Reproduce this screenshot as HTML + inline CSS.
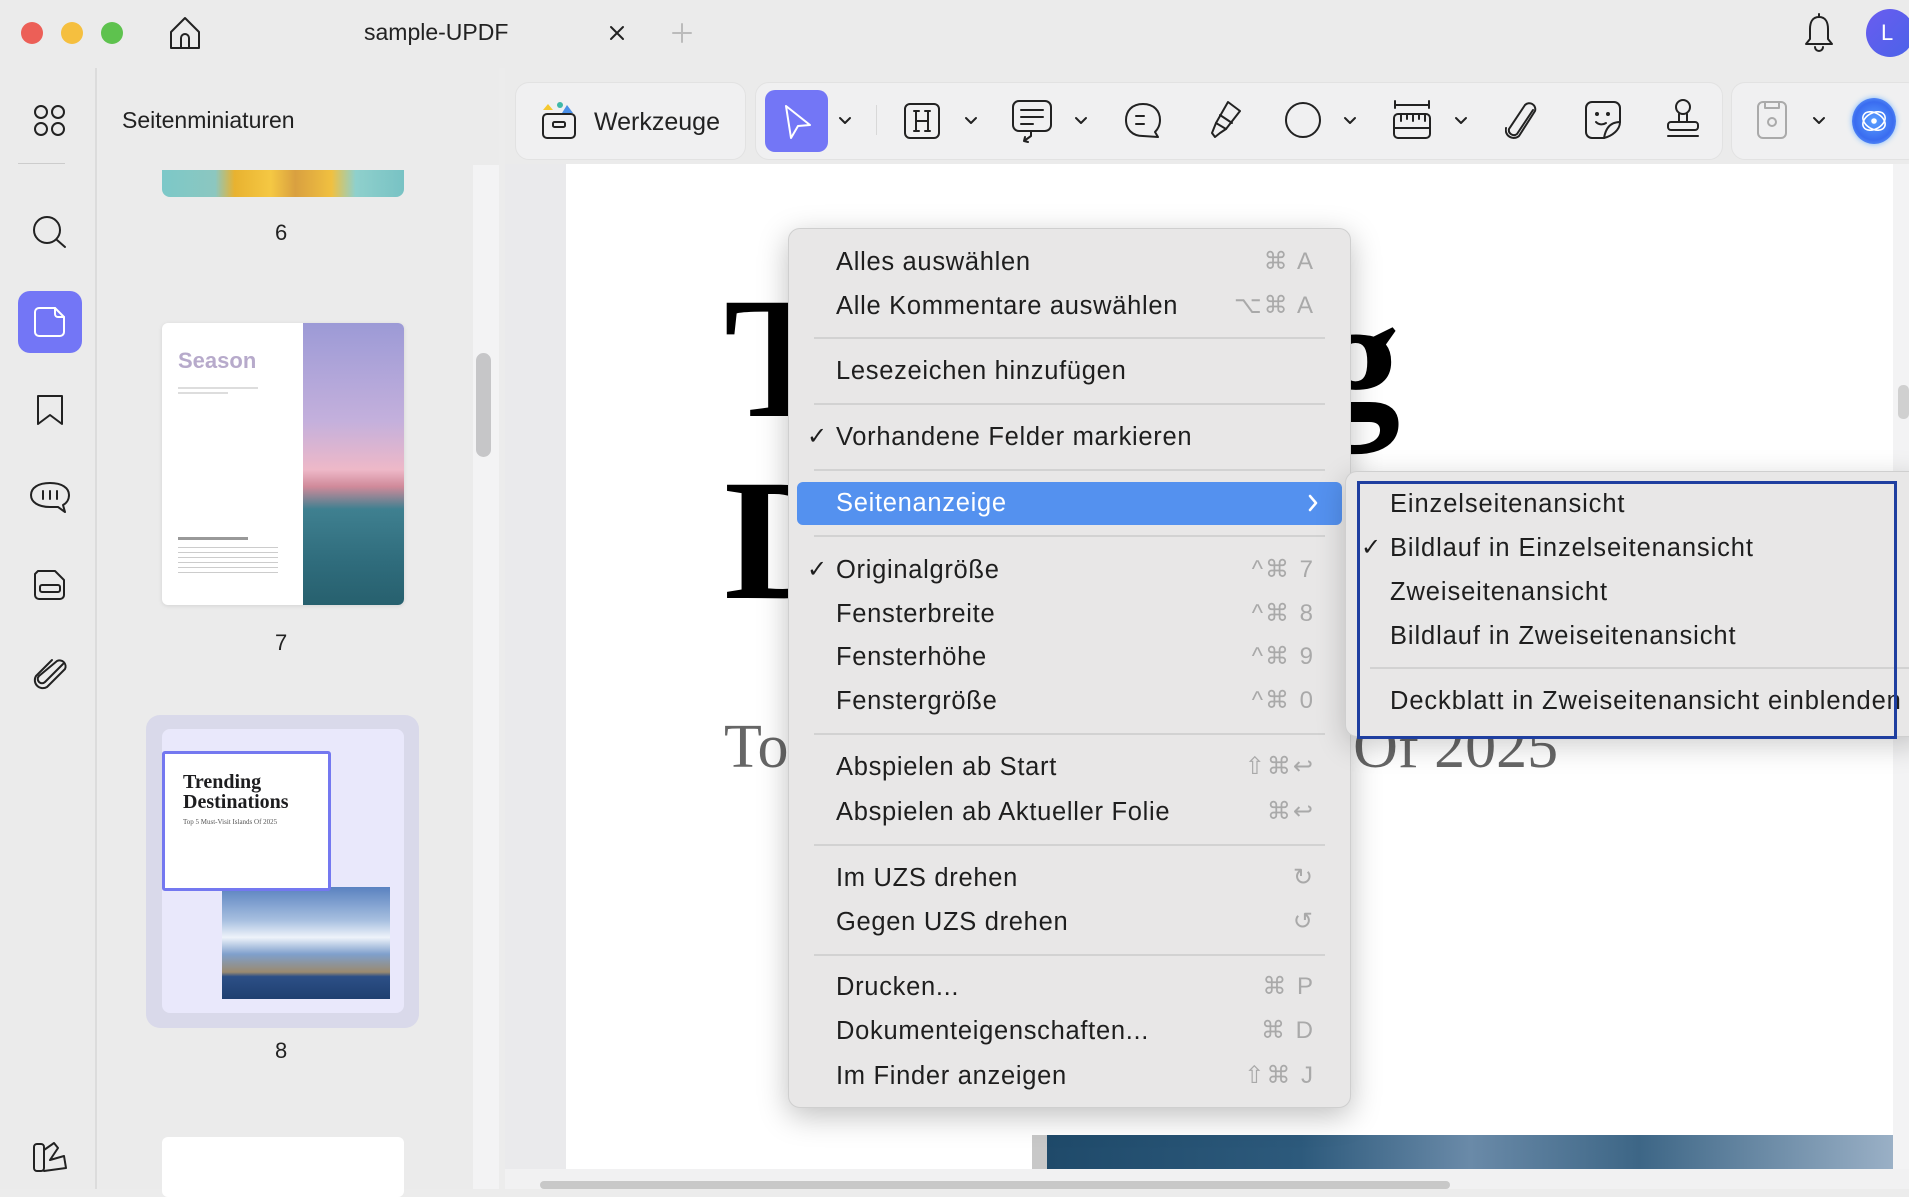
<!DOCTYPE html>
<html><head><meta charset="utf-8"><style>
*{margin:0;padding:0;box-sizing:border-box}
body{width:1909px;height:1189px;overflow:hidden;background:#ececec;font-family:"Liberation Sans",sans-serif;position:relative;color:#1d1d1f}
.a{position:absolute}
.ic{position:absolute;fill:none;stroke:#222;stroke-width:2;stroke-linecap:round;stroke-linejoin:round}
.mi{position:absolute;left:836px;font-size:25.5px;letter-spacing:0.7px;color:#1e1e1e;line-height:30px;transform:translateY(-15px);white-space:nowrap}
.sc{position:absolute;right:594px;font-size:24px;color:#a9a9a9;line-height:30px;transform:translateY(-15px);letter-spacing:2px}
.sep{position:absolute;left:814px;width:511px;height:2px;background:#d2d2d2}
.chk{position:absolute;font-size:24px;line-height:30px;transform:translateY(-15px);color:#1e1e1e}
.smi{position:absolute;left:1390px;font-size:25.5px;letter-spacing:0.9px;color:#1e1e1e;line-height:30px;transform:translateY(-15px);white-space:nowrap}
</style></head><body>
<!-- title bar -->
<div class="a" style="left:0;top:0;width:1909px;height:68px;background:#ebebeb"></div>
<div class="a" style="left:21px;top:22px;width:22px;height:22px;border-radius:50%;background:#ec5f57"></div>
<div class="a" style="left:61px;top:22px;width:22px;height:22px;border-radius:50%;background:#f5bf3f"></div>
<div class="a" style="left:101px;top:22px;width:22px;height:22px;border-radius:50%;background:#5ec24e"></div>
<svg class="ic" style="left:166px;top:14px" width="38" height="38" viewBox="0 0 38 38"><path d="M5 18 L19 4 L33 18 V34 H5 Z"/><path d="M15 34 V24 a4 4 0 0 1 8 0 V34"/></svg>
<div class="a" style="left:364px;top:19px;font-size:23px;color:#222">sample-UPDF</div>
<svg class="ic" style="left:609px;top:25px" width="16" height="16"><path d="M2 2L14 14M14 2L2 14"/></svg>
<svg class="ic" style="left:672px;top:23px;stroke:#bbb" width="20" height="20"><path d="M10 1V19M1 10H19"/></svg>
<svg class="ic" style="left:1802px;top:13px" width="34" height="40" viewBox="0 0 34 40"><path d="M17 4 C10 4 8 10 8 16 V26 L4 31 H30 L26 26 V16 C26 10 24 4 17 4Z"/><path d="M13 34 a4 4 0 0 0 8 0"/><path d="M17 1V4"/></svg>
<div class="a" style="left:1866px;top:9px;width:48px;height:48px;border-radius:50%;background:linear-gradient(135deg,#6a5cf0,#4a63e8);color:#fff;font-size:22px;line-height:48px;padding-left:15px">L</div>

<!-- left icon bar -->
<div class="a" style="left:0;top:68px;width:97px;height:1121px;background:#ebebeb;border-right:2px solid #dcdcdc"></div>
<svg class="ic" style="left:33px;top:104px" width="34" height="34" viewBox="0 0 34 34"><circle cx="8" cy="8" r="6"/><circle cx="25" cy="8" r="6"/><circle cx="8" cy="25" r="6"/><circle cx="25" cy="25" r="6"/></svg>
<div class="a" style="left:18px;top:163px;width:47px;height:1px;background:#ccc"></div>
<svg class="ic" style="left:30px;top:214px" width="40" height="36" viewBox="0 0 40 36"><circle cx="17" cy="16" r="13"/><path d="M27 26L35 33"/></svg>
<div class="a" style="left:18px;top:291px;width:64px;height:62px;border-radius:12px;background:#7376f6"></div>
<svg class="ic" style="left:33px;top:306px;stroke:#fff" width="34" height="32" viewBox="0 0 34 32"><path d="M6 2 H22 L31 11 V26 a4 4 0 0 1-4 4 H6 a4 4 0 0 1-4-4 V6 a4 4 0 0 1 4-4Z"/><path d="M22 2 V8 a3 3 0 0 0 3 3 H31"/></svg>
<svg class="ic" style="left:35px;top:393px" width="30" height="34" viewBox="0 0 30 34"><path d="M3 3 H27 V31 L15 22 L3 31 Z"/></svg>
<svg class="ic" style="left:29px;top:480px" width="42" height="36" viewBox="0 0 42 36"><path d="M21 3 C9 3 2 8 2 15 C2 22 9 27 21 27 L29 27 L36 32 L34 25 C38 23 40 19 40 15 C40 8 33 3 21 3Z"/><path d="M14 11V19M21 11V19M28 11V19"/></svg>
<svg class="ic" style="left:33px;top:568px" width="34" height="34" viewBox="0 0 34 34"><path d="M5 3 H22 L31 12 V27 a4 4 0 0 1-4 4 H6 a4 4 0 0 1-4-4 V6Z"/><rect x="7" y="17" width="20" height="7" rx="2"/></svg>
<svg class="ic" style="left:33px;top:656px" width="36" height="36" viewBox="0 0 36 36"><path d="M30 8 L12 26 a4 4 0 0 1-6-6 L24 5 a6 6 0 0 1 8 8 L14 31 a8 8 0 0 1-11-11 L19 4"/></svg>
<svg class="ic" style="left:32px;top:1140px" width="36" height="34" viewBox="0 0 36 34"><rect x="2" y="4" width="10" height="27" rx="3"/><path d="M12 10 L22 3 L26 8 L18 20 L32 16 L34 28 L12 31"/></svg>

<!-- thumbnail panel -->
<div class="a" style="left:99px;top:68px;width:400px;height:1121px;background:#ebebeb"></div>
<div class="a" style="left:122px;top:107px;font-size:23px;color:#222">Seitenminiaturen</div>
<div class="a" style="left:473px;top:165px;width:26px;height:1024px;background:#f3f3f4"></div>
<div class="a" style="left:476px;top:353px;width:15px;height:104px;border-radius:8px;background:#c6c6c8"></div>
<div class="a" style="left:162px;top:170px;width:242px;height:27px;border-radius:0 0 8px 8px;background:linear-gradient(90deg,#7cc8c8 0,#8cc7c0 22%,#e8b230 30%,#f5c843 45%,#d9a040 55%,#f0c040 70%,#8fd0cc 80%,#78c2c4)"></div>
<div class="a" style="left:275px;top:220px;font-size:22px;color:#222">6</div>
<div class="a" style="left:162px;top:323px;width:242px;height:282px;background:#fff;border-radius:6px;overflow:hidden;box-shadow:0 1px 4px rgba(0,0,0,.1)">
 <div class="a" style="left:141px;top:0;width:101px;height:282px;background:linear-gradient(180deg,#9c9ad6 0,#c4b0dc 35%,#eeb8c8 52%,#d08a9a 58%,#3f8090 66%,#2f6c7c 85%,#27606e)"></div>
 <div class="a" style="left:16px;top:25px;font-size:22px;font-weight:bold;color:#b7aacb">Season</div>
 <div class="a" style="left:16px;top:64px;width:80px;height:2px;background:#ddd"></div>
 <div class="a" style="left:16px;top:69px;width:50px;height:2px;background:#ddd"></div>
 <div class="a" style="left:16px;top:214px;width:70px;height:3px;background:#999"></div>
 <div class="a" style="left:16px;top:224px;width:100px;height:30px;background:repeating-linear-gradient(180deg,#ccc 0,#ccc 1px,transparent 1px,transparent 5px)"></div>
</div>
<div class="a" style="left:275px;top:630px;font-size:22px;color:#222">7</div>
<div class="a" style="left:146px;top:715px;width:273px;height:313px;border-radius:14px;background:#d9d9ea"></div>
<div class="a" style="left:162px;top:729px;width:242px;height:284px;border-radius:8px;background:#e9e8fb;overflow:hidden">
 <div class="a" style="left:60px;top:158px;width:168px;height:112px;background:linear-gradient(180deg,#5a82c0 0,#a8c0e0 30%,#eef3fa 45%,#7fa0cc 60%,#9a8a70 76%,#2c4f86 80%,#1f3f70)"></div>
</div>
<div class="a" style="left:162px;top:751px;width:169px;height:140px;background:#fff;border:3px solid #7478f0;border-radius:3px;font-family:'Liberation Serif',serif">
 <div style="padding:18px 0 0 18px;font-size:20px;font-weight:bold;line-height:20px">Trending<br>Destinations</div>
 <div style="padding:6px 0 0 18px;font-size:7px;color:#555">Top 5 Must-Visit Islands Of 2025</div>
</div>
<div class="a" style="left:275px;top:1038px;font-size:22px;color:#222">8</div>
<div class="a" style="left:162px;top:1137px;width:242px;height:60px;background:#fff;border-radius:6px"></div>

<!-- toolbar -->
<div class="a" style="left:505px;top:68px;width:1404px;height:100px;background:#ebebeb"></div>
<div class="a" style="left:515px;top:82px;width:231px;height:78px;border-radius:14px;background:#f0f0f1;border:1px solid #e2e2e2"></div>
<svg class="a" style="left:540px;top:100px" width="38" height="42" viewBox="0 0 38 42"><path d="M3 10 L8 4 L13 10Z" fill="#f5c830"/><circle cx="20" cy="5" r="3" fill="#3fb8a8"/><path d="M22 13 L27 5 L33 13Z" fill="#4a8fe8"/><rect x="3" y="14" width="32" height="24" rx="4" fill="none" stroke="#222" stroke-width="2"/><rect x="13" y="22" width="12" height="5" rx="1.5" fill="none" stroke="#222" stroke-width="2"/></svg>
<div class="a" style="left:594px;top:108px;font-size:25px;color:#222">Werkzeuge</div>
<div class="a" style="left:755px;top:82px;width:968px;height:78px;border-radius:14px;background:#f0f0f1;border:1px solid #e2e2e2"></div>
<div class="a" style="left:1731px;top:82px;width:190px;height:78px;border-radius:14px;background:#f0f0f1;border:1px solid #e2e2e2"></div>
<div class="a" style="left:765px;top:90px;width:63px;height:62px;border-radius:10px;background:#7376f6"></div>
<svg class="ic" style="left:780px;top:103px;stroke:#fff" width="34" height="38" viewBox="0 0 34 38"><path d="M6 3 L30 22 L18 23 L11 35 Z"/></svg>
<svg class="ic" style="left:838px;top:116px" width="14" height="9"><path d="M2 2L7 7L12 2"/></svg>
<div class="a" style="left:876px;top:105px;width:1px;height:30px;background:#d8d8d8"></div>
<svg class="ic" style="left:903px;top:102px" width="38" height="38" viewBox="0 0 38 38"><rect x="2" y="2" width="34" height="34" rx="5"/><path d="M11 9H16M22 9H27M11 29H16M22 29H27M13 9V29M25 9V29M13 19H25"/></svg>
<svg class="ic" style="left:964px;top:116px" width="14" height="9"><path d="M2 2L7 7L12 2"/></svg>
<svg class="ic" style="left:1011px;top:99px" width="42" height="46" viewBox="0 0 42 46"><rect x="2" y="2" width="38" height="30" rx="6"/><path d="M10 11H32M10 18H32M10 25H22"/><path d="M20 32 V37 L13 42 M13 42 L17 43 M13 42 L14 38"/></svg>
<svg class="ic" style="left:1074px;top:116px" width="14" height="9"><path d="M2 2L7 7L12 2"/></svg>
<svg class="ic" style="left:1123px;top:101px" width="40" height="40" viewBox="0 0 40 40"><path d="M20 3 C9 3 3 10 3 19 C3 28 9 35 20 35 L35 36 L32 31 C35 28 37 24 37 19 C37 10 31 3 20 3Z"/><path d="M13 15H21M13 23H21"/></svg>
<svg class="ic" style="left:1206px;top:99px" width="38" height="42" viewBox="0 0 38 42"><path d="M22 3 L34 12 L20 30 L10 24 Z"/><path d="M10 24 L6 34 L9 38 L14 34 L20 30"/><path d="M14 16 L26 24"/></svg>
<svg class="ic" style="left:1283px;top:100px" width="40" height="40" viewBox="0 0 40 40"><ellipse cx="20" cy="20" rx="17" ry="17"/></svg>
<svg class="ic" style="left:1343px;top:116px" width="14" height="9"><path d="M2 2L7 7L12 2"/></svg>
<svg class="ic" style="left:1392px;top:98px" width="40" height="44" viewBox="0 0 40 44"><path d="M3 3V10M37 3V10M3 7H37"/><rect x="2" y="16" width="36" height="24" rx="4"/><path d="M2 30H38M9 16V23M15 16V21M21 16V23M27 16V21M33 16V23"/></svg>
<svg class="ic" style="left:1454px;top:116px" width="14" height="9"><path d="M2 2L7 7L12 2"/></svg>
<svg class="ic" style="left:1505px;top:100px" width="36" height="42" viewBox="0 0 36 42"><path d="M28 10 L12 34 a5 5 0 0 1-8-5 L20 5 a6 6 0 0 1 10 6 L14 36 a8 8 0 0 1-13-8"/></svg>
<svg class="ic" style="left:1584px;top:100px" width="38" height="40" viewBox="0 0 38 40"><path d="M8 2 H30 a6 6 0 0 1 6 6 V22 C36 30 28 36 20 38 H8 a6 6 0 0 1-6-6 V8 a6 6 0 0 1 6-6Z"/><path d="M36 22 C28 22 22 26 20 38"/><circle cx="13" cy="14" r="1" fill="#222"/><circle cx="24" cy="14" r="1" fill="#222"/><path d="M12 22 C15 25 19 25 22 23"/></svg>
<svg class="ic" style="left:1664px;top:98px" width="38" height="44" viewBox="0 0 38 44"><circle cx="19" cy="9" r="7"/><path d="M15 16V24M23 16V24"/><rect x="4" y="24" width="30" height="8" rx="3"/><path d="M4 38H34"/></svg>
<svg class="ic" style="left:1756px;top:100px;stroke:#aaa" width="32" height="40" viewBox="0 0 32 40"><rect x="2" y="2" width="28" height="36" rx="5"/><path d="M9 2V8H23V2"/><circle cx="16" cy="22" r="4"/></svg>
<svg class="ic" style="left:1812px;top:116px" width="14" height="9"><path d="M2 2L7 7L12 2"/></svg>
<div class="a" style="left:1852px;top:98px;width:44px;height:46px;border-radius:50%;background:radial-gradient(circle,#5aa0ff 0,#3a6cf0 60%,#7ab8ff 100%);box-shadow:0 0 6px #7ab8ff"></div>
<svg class="ic" style="left:1858px;top:105px;stroke:#fff;stroke-width:1.6" width="32" height="32" viewBox="0 0 32 32"><ellipse cx="16" cy="16" rx="12" ry="8" transform="rotate(30 16 16)"/><ellipse cx="16" cy="16" rx="12" ry="8" transform="rotate(-30 16 16)"/><circle cx="16" cy="16" r="2" fill="#fff"/></svg>

<!-- document area -->
<div class="a" style="left:505px;top:164px;width:61px;height:1025px;background:#eaeaec"></div>
<div class="a" style="left:566px;top:164px;width:1327px;height:1005px;background:#fff"></div>
<div class="a" style="left:1893px;top:164px;width:16px;height:1025px;background:#f3f3f4"></div>
<div class="a" style="left:1898px;top:385px;width:11px;height:34px;border-radius:5px;background:#d0d0d0"></div>
<div class="a" style="left:505px;top:1169px;width:1404px;height:20px;background:#f1f1f2"></div>
<div class="a" style="left:540px;top:1181px;width:910px;height:8px;border-radius:4px;background:#c8c8c8"></div>
<div class="a" style="left:724px;top:272px;font-family:'Liberation Serif',serif;font-weight:bold;font-size:173px;line-height:173px;color:#000;white-space:nowrap">Trending</div>
<div class="a" style="left:724px;top:454px;font-family:'Liberation Serif',serif;font-weight:bold;font-size:173px;line-height:173px;color:#000">D</div>
<div class="a" style="left:724px;top:712px;font-family:'Liberation Serif',serif;font-size:62px;line-height:70px;color:#666;white-space:nowrap">Top 5 Must-Visit Islands Of 2025</div>
<div class="a" style="left:1032px;top:1135px;width:15px;height:34px;background:#c8c8c8"></div>
<div class="a" style="left:1047px;top:1135px;width:846px;height:34px;background:linear-gradient(90deg,#1f4a6a 0,#2d5a7c 30%,#6a8aa8 50%,#3d6686 70%,#9ab0c6 100%)"></div>

<!-- main context menu -->
<div class="a" style="left:788px;top:228px;width:563px;height:880px;border-radius:12px;background:#e8e7e7;border:1px solid #cfcfcf;box-shadow:0 8px 30px rgba(0,0,0,.25)"></div>
<div class="mi" style="top:262px">Alles auswählen</div><div class="sc" style="top:262px">⌘ A</div>
<div class="mi" style="top:306px">Alle Kommentare auswählen</div><div class="sc" style="top:306px">⌥⌘ A</div>
<div class="sep" style="top:337px"></div>
<div class="mi" style="top:371px">Lesezeichen hinzufügen</div>
<div class="sep" style="top:403px"></div>
<div class="chk" style="left:807px;top:437px">✓</div><div class="mi" style="top:437px">Vorhandene Felder markieren</div>
<div class="sep" style="top:469px"></div>
<div class="a" style="left:797px;top:482px;width:545px;height:43px;border-radius:6px;background:#5491ef"></div>
<div class="mi" style="top:503px;color:#fff">Seitenanzeige</div>
<svg class="ic" style="left:1307px;top:494px;stroke:#fff;stroke-width:2.5" width="12" height="18"><path d="M3 2L9 9L3 16"/></svg>
<div class="sep" style="top:535px"></div>
<div class="chk" style="left:807px;top:570px">✓</div><div class="mi" style="top:570px">Originalgröße</div><div class="sc" style="top:570px">^⌘ 7</div>
<div class="mi" style="top:614px">Fensterbreite</div><div class="sc" style="top:614px">^⌘ 8</div>
<div class="mi" style="top:657px">Fensterhöhe</div><div class="sc" style="top:657px">^⌘ 9</div>
<div class="mi" style="top:701px">Fenstergröße</div><div class="sc" style="top:701px">^⌘ 0</div>
<div class="sep" style="top:733px"></div>
<div class="mi" style="top:767px">Abspielen ab Start</div><div class="sc" style="top:767px">⇧⌘↩</div>
<div class="mi" style="top:812px">Abspielen ab Aktueller Folie</div><div class="sc" style="top:812px">⌘↩</div>
<div class="sep" style="top:844px"></div>
<div class="mi" style="top:878px">Im UZS drehen</div><div class="sc" style="top:878px">↻</div>
<div class="mi" style="top:922px">Gegen UZS drehen</div><div class="sc" style="top:922px">↺</div>
<div class="sep" style="top:954px"></div>
<div class="mi" style="top:987px">Drucken...</div><div class="sc" style="top:987px">⌘ P</div>
<div class="mi" style="top:1031px">Dokumenteigenschaften...</div><div class="sc" style="top:1031px">⌘ D</div>
<div class="mi" style="top:1076px">Im Finder anzeigen</div><div class="sc" style="top:1076px">⇧⌘ J</div>

<!-- submenu -->
<div class="a" style="left:1345px;top:471px;width:580px;height:266px;border-radius:12px;background:#e8e7e7;border:1px solid #cfcfcf;box-shadow:0 8px 30px rgba(0,0,0,.2)"></div>
<div class="smi" style="top:504px">Einzelseitenansicht</div>
<div class="chk" style="left:1361px;top:548px">✓</div><div class="smi" style="top:548px">Bildlauf in Einzelseitenansicht</div>
<div class="smi" style="top:592px">Zweiseitenansicht</div>
<div class="smi" style="top:636px">Bildlauf in Zweiseitenansicht</div>
<div class="a" style="left:1370px;top:667px;width:539px;height:2px;background:#d2d2d2"></div>
<div class="smi" style="top:701px">Deckblatt in Zweiseitenansicht einblenden</div>
<div class="a" style="left:1357px;top:481px;width:540px;height:258px;border:3px solid #1f3fa0"></div>
</body></html>
